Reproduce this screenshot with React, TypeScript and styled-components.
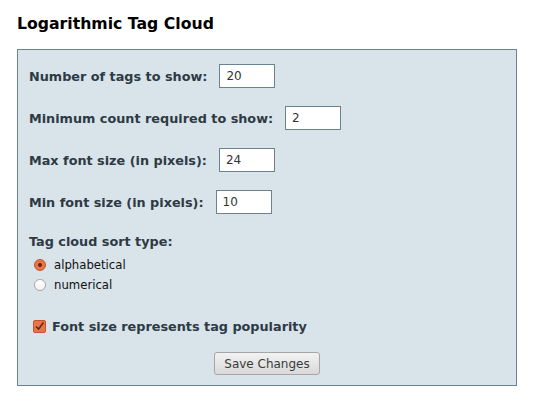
import styled, { createGlobalStyle } from 'styled-components';

const GlobalStyle = createGlobalStyle`
    body {
        margin: 0;
        background: #fff;
        font-family: "DejaVu Sans", Verdana, sans-serif;
    }
`;

const Page = styled.div`
    width: 534px;
    height: 405px;
    padding: 14px 0 0 17px;
    box-sizing: border-box;
`;

const Title = styled.h2`
    margin: 0 0 15px 0;
    font-size: 15.7px;
    line-height: 20px;
    font-weight: bold;
    color: #000;
`;

const Panel = styled.form`
    width: 500px;
    height: 337px;
    box-sizing: border-box;
    background-color: #d9e3ea;
    border: 1px solid #6b8292;
    padding: 14px 0 0 11px;
    display: flex;
    flex-direction: column;
`;

const FieldRow = styled.div`
    display: flex;
    align-items: center;
    gap: 12px;
    height: 24px;
    margin-bottom: 18px;
`;

const Label = styled.label`
    font-size: 12.8px;
    font-weight: bold;
    color: #2d3a44;
`;

const TextInput = styled.input`
    width: 56px;
    height: 24px;
    box-sizing: border-box;
    border: 1px solid #6b8292;
    background: #fff;
    padding: 0 0 0 6px;
    font-family: "DejaVu Sans", Verdana, sans-serif;
    font-size: 12px;
    color: #333;
    outline: none;
`;

const SortHeading = styled.div`
    font-size: 12.8px;
    font-weight: bold;
    color: #2d3a44;
    line-height: 16px;
    margin-top: 2px;
`;

const RadioList = styled.div`
    display: flex;
    flex-direction: column;
    padding-left: 5px;
    margin-top: 5px;
`;

const RadioRow = styled.label`
    display: flex;
    align-items: center;
    gap: 8px;
    height: 20px;
    font-size: 11.7px;
    color: #111;
`;

const RadioDot = styled.span<{ $checked?: boolean }>`
    width: 12px;
    height: 12px;
    border-radius: 50%;
    box-sizing: border-box;
    border: 1px solid ${p => (p.$checked ? '#c5522c' : '#a9a9a9')};
    background: ${p =>
        p.$checked
            ? 'radial-gradient(circle, #6a2c18 0 1.7px, #e8744a 2.3px)'
            : 'linear-gradient(#ffffff, #f1f1f1)'};
`;

const CheckRow = styled.label`
    display: flex;
    align-items: center;
    gap: 6px;
    margin-top: 24px;
    padding-left: 4px;
    font-size: 12.8px;
    font-weight: bold;
    color: #2d3a44;
`;

const CheckBox = styled.span`
    width: 13px;
    height: 13px;
    box-sizing: border-box;
    border-radius: 2px;
    background: #e8744a;
    border: 1px solid #c5522c;
    display: flex;
    align-items: center;
    justify-content: center;
`;

const ButtonRow = styled.div`
    display: flex;
    justify-content: center;
    margin-top: 18px;
    padding-right: 11px;
`;

const SaveButton = styled.button`
    width: 106px;
    height: 23px;
    border: 1px solid #a6a6a6;
    border-radius: 3px;
    background: linear-gradient(#f2f2f2, #d9d9d9);
    font-family: "DejaVu Sans", Verdana, sans-serif;
    font-size: 12px;
    color: #3a3a3a;
    padding: 0;
`;

const fields = [
    { label: 'Number of tags to show:', value: '20' },
    { label: 'Minimum count required to show:', value: '2' },
    { label: 'Max font size (in pixels):', value: '24' },
    { label: 'Min font size (in pixels):', value: '10' },
];

function App() {
    return (
        <Page>
            <GlobalStyle />
            <Title>Logarithmic Tag Cloud</Title>
            <Panel>
                {fields.map(f => (
                    <FieldRow key={f.label}>
                        <Label>{f.label}</Label>
                        <TextInput defaultValue={f.value} />
                    </FieldRow>
                ))}
                <SortHeading>Tag cloud sort type:</SortHeading>
                <RadioList>
                    <RadioRow>
                        <RadioDot $checked />
                        alphabetical
                    </RadioRow>
                    <RadioRow>
                        <RadioDot />
                        numerical
                    </RadioRow>
                </RadioList>
                <CheckRow>
                    <CheckBox>
                        <svg width="11" height="11" viewBox="0 0 11 11">
                            <path d="M2 5.5 L4.5 8 L9.5 1.5" stroke="#5a2a18" strokeWidth="1.5" fill="none" />
                        </svg>
                    </CheckBox>
                    Font size represents tag popularity
                </CheckRow>
                <ButtonRow>
                    <SaveButton type="button">Save Changes</SaveButton>
                </ButtonRow>
            </Panel>
        </Page>
    );
}

export default App;
